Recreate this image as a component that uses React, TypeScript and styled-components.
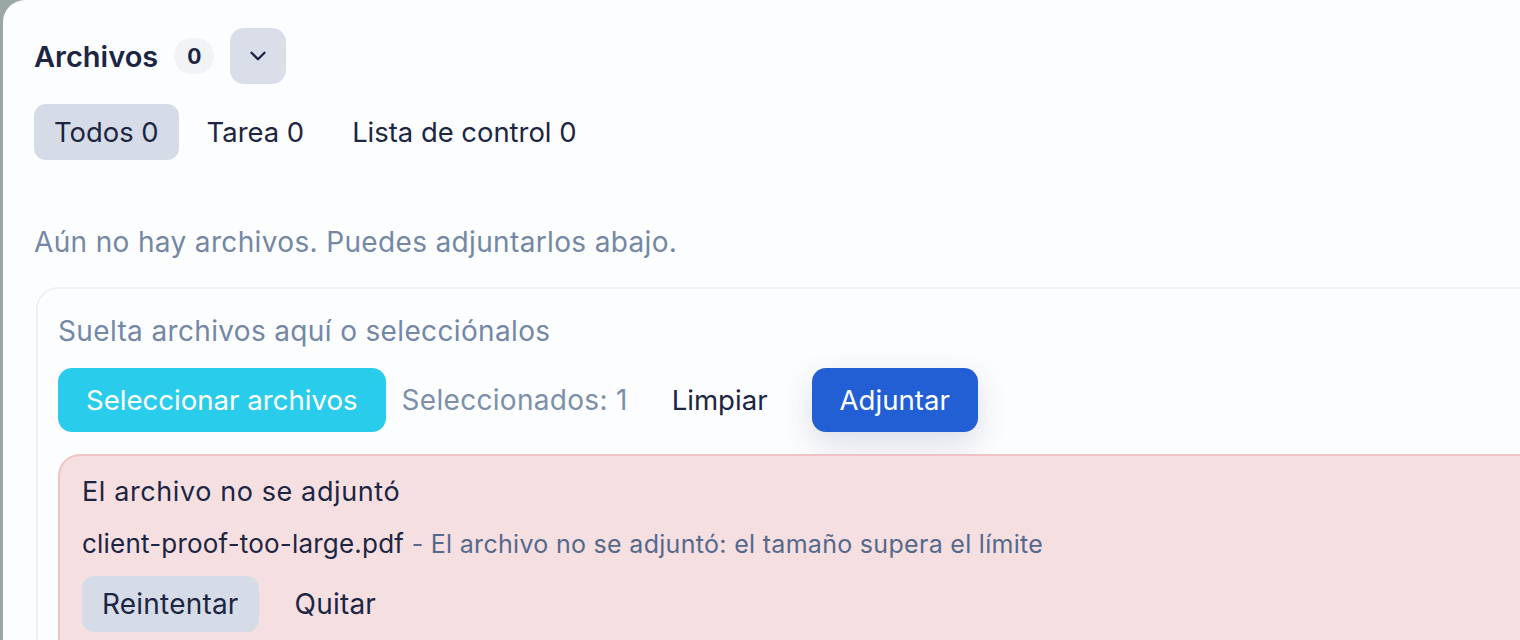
import React from "react";
import styled, { createGlobalStyle } from "styled-components";

const Global = createGlobalStyle`
  html, body { margin: 0; padding: 0; overflow: hidden; }
  body {
    background: #9ba6a6;
    font-family: Inter, "Noto Sans", "Liberation Sans", sans-serif;
    -webkit-font-smoothing: antialiased;
  }
  * { box-sizing: border-box; }
`;

const Panel = styled.div`
  margin-left: 3px;
  width: 1600px;
  height: 640px;
  background: #fcfdfe;
  border-top-left-radius: 22px;
  padding: 28px 0 0 31px;
  display: flex;
  flex-direction: column;
  color: #1c2541;
`;

const Header = styled.div`
  display: flex;
  align-items: center;
  gap: 16px;
  height: 56px;
`;

const Title = styled.h2`
  margin: 0;
  font-size: 29px;
  font-weight: 600;
  color: #1c2541;
`;

const Badge = styled.span`
  display: inline-flex;
  align-items: center;
  justify-content: center;
  min-width: 40px;
  height: 36px;
  padding: 0 12px;
  border-radius: 18px;
  background: #f1f3f7;
  font-size: 21px;
  font-weight: 700;
  color: #1c2541;
`;

const IconButton = styled.button`
  width: 56px;
  height: 56px;
  border: none;
  border-radius: 14px;
  background: #d9dee8;
  display: flex;
  align-items: center;
  justify-content: center;
  color: #1c2541;
  padding: 0;
`;

const Tabs = styled.div`
  display: flex;
  gap: 8px;
  margin-top: 20px;
`;

const Tab = styled.button<{ $active?: boolean }>`
  height: 56px;
  padding: 0 20px;
  border: none;
  border-radius: 12px;
  background: ${(p) => (p.$active ? "#d6dce7" : "transparent")};
  font-family: inherit;
  font-size: 27.4px;
  color: #1c2541;
`;

const Empty = styled.p`
  margin: 62px 0 0;
  font-size: 28px;
  letter-spacing: 0.35px;
  line-height: 40px;
  color: #7487a4;
`;

const DropCard = styled.div`
  margin-top: 25px;
  margin-left: 2px;
  border: 2px solid #eff1f5;
  border-right: none;
  border-bottom: none;
  border-radius: 22px 0 0 0;
  padding: 22px 0 0 20px;
  flex: 1;
  display: flex;
  flex-direction: column;
`;

const Hint = styled.div`
  font-size: 28px;
  letter-spacing: 0.35px;
  line-height: 40px;
  color: #7487a4;
`;

const Actions = styled.div`
  display: flex;
  align-items: center;
  gap: 16px;
  margin-top: 17px;
`;

type Variant = "cyan" | "blue" | "ghost" | "soft" | "plain";

const Button = styled.button<{ $variant: Variant }>`
  height: ${(p) => (p.$variant === "cyan" || p.$variant === "blue" || p.$variant === "ghost" ? "64px" : "56px")};
  padding: 0 ${(p) => (p.$variant === "soft" || p.$variant === "plain" ? "20px" : "28px")};
  border: none;
  border-radius: ${(p) => (p.$variant === "soft" || p.$variant === "plain" ? "12px" : "14px")};
  font-family: inherit;
  font-size: ${(p) => (p.$variant === "soft" || p.$variant === "plain" ? "28px" : "27.6px")};
  letter-spacing: ${(p) => (p.$variant === "soft" || p.$variant === "plain" ? "0.2px" : "0")};
  white-space: nowrap;
  background: ${(p) =>
    p.$variant === "cyan" ? "#29cdeb" : p.$variant === "blue" ? "#235fd4" : p.$variant === "soft" ? "#d6dce7" : "transparent"};
  color: ${(p) => (p.$variant === "cyan" || p.$variant === "blue" ? "#ffffff" : "#1c2541")};
  box-shadow: ${(p) => (p.$variant === "blue" ? "0 12px 32px rgba(40, 55, 100, 0.16)" : "none")};
`;

const Count = styled.span`
  font-size: 28px;
  letter-spacing: 0.3px;
  color: #7d8fa8;
`;

const ErrorBox = styled.div`
  margin-top: 22px;
  border: 2px solid #efc2c3;
  border-right: none;
  border-bottom: none;
  border-radius: 22px 0 0 0;
  background: #f6dfe1;
  padding: 18px 0 0 22px;
  flex: 1;
`;

const ErrorTitle = styled.div`
  font-size: 27px;
  letter-spacing: 0.6px;
  line-height: 36px;
  color: #1c2541;
`;

const FileLine = styled.div`
  margin-top: 16px;
  font-size: 26px;
  letter-spacing: 0.2px;
  line-height: 36px;
  color: #1c2541;
`;

const Detail = styled.span`
  font-size: 25px;
  letter-spacing: 0.3px;
  color: #55698b;
`;

const ErrorActions = styled.div`
  display: flex;
  gap: 16px;
  margin-top: 14px;
`;

export default function App() {
  return (
    <>
      <Global />
      <Panel>
        <Header>
          <Title>Archivos</Title>
          <Badge>0</Badge>
          <IconButton aria-label="Expandir">
            <svg width="26" height="26" viewBox="0 0 24 24" fill="none" stroke="currentColor" strokeWidth="2.2" strokeLinecap="round" strokeLinejoin="round">
              <path d="M6 9l6 6 6-6" />
            </svg>
          </IconButton>
        </Header>
        <Tabs>
          <Tab $active>Todos 0</Tab>
          <Tab>Tarea 0</Tab>
          <Tab>Lista de control 0</Tab>
        </Tabs>
        <Empty>Aún no hay archivos. Puedes adjuntarlos abajo.</Empty>
        <DropCard>
          <Hint>Suelta archivos aquí o selecciónalos</Hint>
          <Actions>
            <Button $variant="cyan">Seleccionar archivos</Button>
            <Count>Seleccionados: 1</Count>
            <Button $variant="ghost">Limpiar</Button>
            <Button $variant="blue">Adjuntar</Button>
          </Actions>
          <ErrorBox>
            <ErrorTitle>El archivo no se adjuntó</ErrorTitle>
            <FileLine>
              client-proof-too-large.pdf <Detail>- El archivo no se adjuntó: el tamaño supera el límite</Detail>
            </FileLine>
            <ErrorActions>
              <Button $variant="soft">Reintentar</Button>
              <Button $variant="plain">Quitar</Button>
            </ErrorActions>
          </ErrorBox>
        </DropCard>
      </Panel>
    </>
  );
}
